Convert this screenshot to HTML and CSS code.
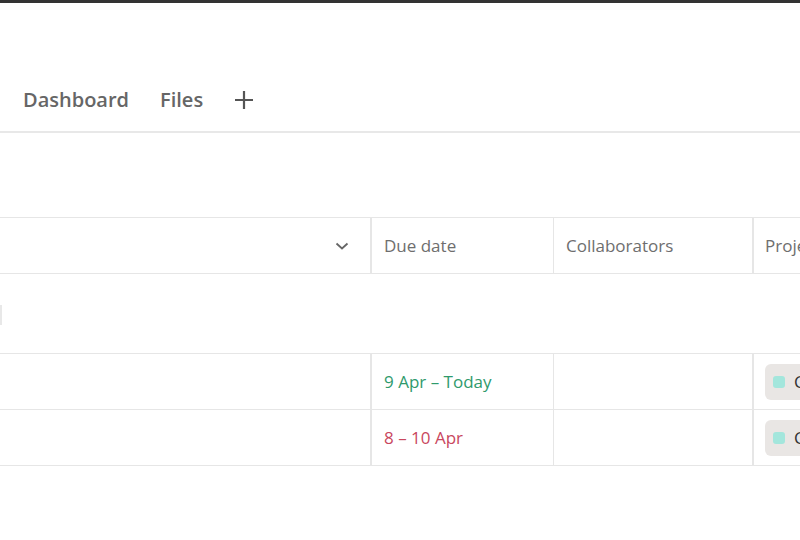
FILE: index.html
```html
<!DOCTYPE html>
<html lang="en">
<head>
    <meta charset="UTF-8">
    <meta name="viewport" content="width=device-width, initial-scale=1.0">
    <title>Tasks</title>
    <link rel="stylesheet" href="styles.css">
</head>
<body>

<div class="topbar"></div>

<nav class="tabs">
    <a class="tab" href="#">Dashboard</a>
    <a class="tab" href="#">Files</a>
    <button class="tab-add" aria-label="Add view">
        <svg width="20" height="20" viewBox="0 0 20 20"><path d="M10 1v18M1 10h18" stroke="currentColor" stroke-width="2.2" fill="none"/></svg>
    </button>
</nav>

<div class="view">
    <div class="grid">
        <div class="row head">
            <div class="cell name">
                <svg class="chevron" width="14" height="8" viewBox="0 0 14 8"><path d="M1.5 1.5l5.5 5 5.5-5" stroke="currentColor" stroke-width="1.8" fill="none"/></svg>
            </div>
            <div class="cell due">Due date</div>
            <div class="cell collab">Collaborators</div>
            <div class="cell project">Project</div>
        </div>

        <div class="group">
            <span class="group-mark"></span>
        </div>

        <div class="row">
            <div class="cell name"></div>
            <div class="cell due today">9 Apr – Today</div>
            <div class="cell collab"></div>
            <div class="cell project"><span class="tag"><span class="dot"></span>Client work</span></div>
        </div>
        <div class="row">
            <div class="cell name"></div>
            <div class="cell due overdue">8 – 10 Apr</div>
            <div class="cell collab"></div>
            <div class="cell project"><span class="tag"><span class="dot"></span>Client work</span></div>
        </div>
    </div>
</div>

</body>
</html>
```

FILE: styles.css
```css
body {
    margin: 0;
    font-family: "Open Sans", "Noto Sans", sans-serif;
    background-color: #fff;
    color: #333;
    overflow: hidden;
}
.topbar {
    height: 3px;
    background-color: #333;
}
.tabs {
    display: flex;
    align-items: flex-end;
    gap: 31px;
    height: 130px;
    box-sizing: border-box;
    padding: 0 0 19px 23px;
    border-bottom: 2px solid #e8e8e8;
}
.tab {
    font-size: 20px;
    font-weight: 600;
    line-height: 24px;
    color: #666;
    text-decoration: none;
}
.tab-add {
    display: flex;
    padding: 0;
    margin-bottom: 2px;
    border: none;
    background: none;
    color: #555;
    cursor: pointer;
}
.view {
    padding-top: 84px;
}
.grid {
    width: 1100px;
}
.row {
    display: flex;
    height: 55px;
    border-bottom: 1px solid #e6e6e6;
}
.row.head {
    border-top: 1px solid #e6e6e6;
}
.cell {
    display: flex;
    align-items: center;
    box-sizing: border-box;
    padding-left: 12px;
    font-size: 17px;
}
.head .cell {
    color: #6e6e6e;
}
.cell.name {
    width: 372px;
    justify-content: flex-end;
    padding-right: 21px;
    border-right: 2px solid #e6e6e6;
}
.cell.due {
    width: 182px;
    border-right: 1px solid #e6e6e6;
}
.cell.collab {
    width: 200px;
    border-right: 2px solid #e6e6e6;
}
.cell.project {
    flex: 1;
    padding-left: 11px;
}
.chevron {
    color: #666;
}
.today {
    color: #2f9a6c;
}
.overdue {
    color: #c9475e;
}
.group {
    height: 80px;
    box-sizing: border-box;
    padding-top: 31px;
    border-bottom: 1px solid #e6e6e6;
}
.group-mark {
    display: block;
    width: 2px;
    height: 20px;
    background-color: #e8e8e8;
}
.tag {
    display: flex;
    align-items: center;
    gap: 9px;
    height: 36px;
    padding: 0 10px 0 8px;
    border-radius: 6px;
    background-color: #e9e6e4;
    color: #333;
}
.dot {
    width: 12px;
    height: 12px;
    border-radius: 3px;
    background-color: #a3e6dc;
}
```
